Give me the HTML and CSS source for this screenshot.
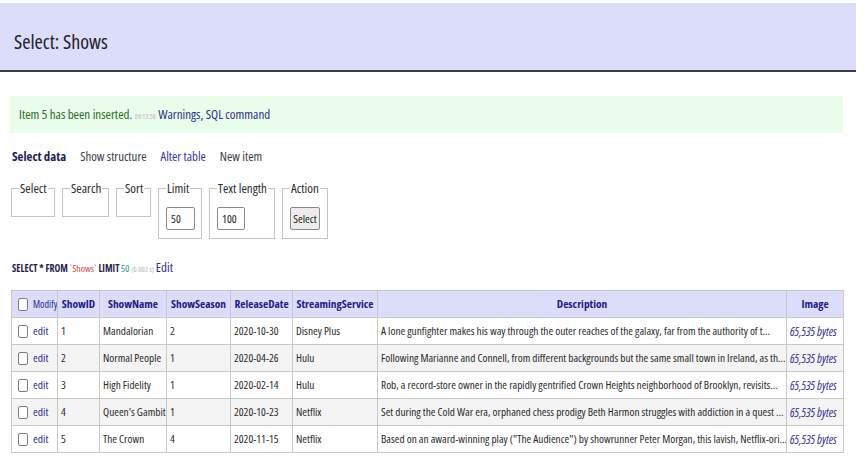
FILE: index.html
```html
<!DOCTYPE html>
<html>
<head>
<meta charset="utf-8">
<title>Select: Shows</title>
<link rel="stylesheet" href="styles.css">
</head>
<body>
<div class="page">
  <h2 class="title">Select: Shows</h2>
  <div class="content">
    <div class="message">Item 5 has been inserted. <span class="time">09:13:56</span> <a class="link" href="#">Warnings, SQL command</a></div>
    <p class="links">
      <a class="nav active" href="#">Select data</a>
      <a class="nav visited" href="#">Show structure</a>
      <a class="nav" href="#">Alter table</a>
      <a class="nav visited" href="#">New item</a>
    </p>
    <form class="filters">
      <fieldset class="fs fs-select"><legend>Select</legend><div class="fs-empty"></div></fieldset>
      <fieldset class="fs fs-search"><legend>Search</legend><div class="fs-empty"></div></fieldset>
      <fieldset class="fs fs-sort"><legend>Sort</legend><div class="fs-empty"></div></fieldset>
      <fieldset class="fs fs-limit"><legend>Limit</legend><span class="inp inp-limit">50</span></fieldset>
      <fieldset class="fs fs-text"><legend>Text length</legend><span class="inp inp-text">100</span></fieldset>
      <fieldset class="fs fs-action"><legend>Action</legend><span class="btn">Select</span></fieldset>
    </form>
    <p class="sql"><code class="query">SELECT * FROM <span class="ident">`Shows`</span> LIMIT <span class="num">50</span></code> <span class="timing">(0.002 s)</span> <a class="link edit-sql" href="#">Edit</a></p>
    <table class="grid">
      <thead>
        <tr>
          <th class="th-mod w-mod"><span class="cb"></span><span class="modify">Modify</span></th>
          <th class="w-id">ShowID</th><th class="w-name">ShowName</th><th class="w-season">ShowSeason</th><th class="w-date">ReleaseDate</th><th class="w-svc">StreamingService</th><th class="w-desc">Description</th><th class="w-img">Image</th>
        </tr>
      </thead>
      <tbody>
        <tr>
          <td class="td-mod"><span class="cb"></span><a class="link" href="#">edit</a></td>
          <td>1</td><td>Mandalorian</td><td>2</td><td>2020-10-30</td><td>Disney Plus</td>
          <td>A lone gunfighter makes his way through the outer reaches of the galaxy, far from the authority of t…</td>
          <td><a class="link bytes" href="#">65,535 bytes</a></td>
        </tr>
        <tr class="odd">
          <td class="td-mod"><span class="cb"></span><a class="link" href="#">edit</a></td>
          <td>2</td><td>Normal People</td><td>1</td><td>2020-04-26</td><td>Hulu</td>
          <td>Following Marianne and Connell, from different backgrounds but the same small town in Ireland, as th…</td>
          <td><a class="link bytes" href="#">65,535 bytes</a></td>
        </tr>
        <tr>
          <td class="td-mod"><span class="cb"></span><a class="link" href="#">edit</a></td>
          <td>3</td><td>High Fidelity</td><td>1</td><td>2020-02-14</td><td>Hulu</td>
          <td>Rob, a record-store owner in the rapidly gentrified Crown Heights neighborhood of Brooklyn, revisits…</td>
          <td><a class="link bytes" href="#">65,535 bytes</a></td>
        </tr>
        <tr class="odd">
          <td class="td-mod"><span class="cb"></span><a class="link" href="#">edit</a></td>
          <td>4</td><td>Queen's Gambit</td><td>1</td><td>2020-10-23</td><td>Netflix</td>
          <td>Set during the Cold War era, orphaned chess prodigy Beth Harmon struggles with addiction in a quest …</td>
          <td><a class="link bytes" href="#">65,535 bytes</a></td>
        </tr>
        <tr>
          <td class="td-mod"><span class="cb"></span><a class="link" href="#">edit</a></td>
          <td>5</td><td>The Crown</td><td>4</td><td>2020-11-15</td><td>Netflix</td>
          <td>Based on an award-winning play ("The Audience") by showrunner Peter Morgan, this lavish, Netflix-ori…</td>
          <td><a class="link bytes" href="#">65,535 bytes</a></td>
        </tr>
      </tbody>
    </table>
  </div>
</div>
</body>
</html>
```
FILE: styles.css
```css
html, body {
  margin: 0;
  padding: 0;
  background: #fff;
}
body {
  font-family: "Open Sans", "DejaVu Sans", sans-serif;
  font-stretch: 75%;
  color: #2a2a2a;
  font-size: 13px;
}
a { text-decoration: none; }
.page {
  padding-top: 3px;
  width: 856px;
}
.title {
  margin: 0;
  background: #dcdcfb;
  border-bottom: 2px solid #3d3d45;
  height: 69px;
  box-sizing: border-box;
  padding: 26px 0 0 14px;
  font-size: 20px;
  line-height: 26px;
  font-weight: normal;
  font-stretch: 80%;
  color: #222;
}
.content {
  padding-left: 11px;
}
.link { color: #2d2d8f; }
.message {
  margin: 24px 0 0 -1px;
  width: 833px;
  height: 37px;
  box-sizing: border-box;
  padding: 0 9px;
  line-height: 37px;
  background: #eafdea;
  color: #2e6a2e;
  font-size: 13px;
}
.time {
  font-size: 7px;
  color: #b5b5b5;
}
.links {
  margin: 15px 0 0 1px;
  line-height: 16px;
  font-size: 12.8px;
  display: flex;
  gap: 14px;
}
.nav { color: #3535a0; }
.nav.visited { color: #3a3a48; }
.nav.active { color: #1d1d55; font-weight: bold; }
.filters {
  display: flex;
  align-items: flex-start;
  gap: 7px;
  margin-top: 17px;
}
.fs {
  margin: 0;
  padding: 9px 6px 8px 7px;
  border: 1px solid #c4c4c4;
  box-sizing: border-box;
  min-width: 0;
}
.fs legend {
  padding: 0 1px;
  font-size: 13px;
  line-height: 14px;
  color: #2a2a2a;
  white-space: nowrap;
}
.fs-empty { height: 4px; }
.fs-select { width: 44px; }
.fs-search { width: 47px; }
.fs-sort { width: 35px; }
.fs-limit { width: 44px; }
.fs-text { width: 66px; }
.fs-action { width: 46px; }
.inp {
  display: block;
  margin-top: 3px;
  height: 23px;
  box-sizing: border-box;
  border: 1px solid #8a8a8a;
  border-radius: 2px;
  padding-left: 4px;
  font-size: 11.5px;
  line-height: 21px;
  background: #fff;
  color: #222;
}
.inp-limit { width: 29px; }
.inp-text { width: 28px; }
.btn {
  display: block;
  margin-top: 3px;
  width: 30px;
  height: 23px;
  box-sizing: border-box;
  border: 1px solid #8a8a8a;
  border-radius: 2px;
  background: #ececec;
  text-align: center;
  font-size: 11.5px;
  line-height: 21px;
  color: #222;
}
.sql {
  margin: 21px 0 0 1px;
  line-height: 14px;
  font-size: 10px;
  white-space: nowrap;
}
.query {
  font-family: "Open Sans", sans-serif;
  font-stretch: 75%;
  font-weight: bold;
  font-size: 9.8px;
  color: #1e1e50;
}
.ident { color: #d04848; font-weight: normal; }
.num { color: #2a9090; font-weight: normal; }
.timing { font-size: 7.5px; color: #b0b0b0; }
.edit-sql { font-size: 13px; }
.grid {
  margin-top: 14px;
  border-collapse: collapse;
  table-layout: fixed;
  width: 832px;
  border: 1px solid #b8b8b8;
  font-size: 11.3px;
}
.grid th, .grid td {
  box-sizing: border-box;
  height: 27px;
  padding: 0 3px;
  border: 1px solid #c8c8c8;
  white-space: nowrap;
  overflow: hidden;
  line-height: 16px;
}
.w-mod { width: 46px; }
.w-id { width: 42px; }
.w-name { width: 67px; }
.w-season { width: 64px; }
.w-date { width: 62px; }
.w-svc { width: 85px; }
.w-desc { width: 409px; }
.w-img { width: 57px; }
.grid tbody tr td { border-top-color: #a8a8a8; }
.grid th {
  background: #dcdcfb;
  color: #20208a;
  font-weight: bold;
  text-align: center;
  font-size: 11.4px;
}
.grid td { color: #2a2a2a; }
.grid tr.odd td { background: #f4f4f4; }
.grid .th-mod, .grid .td-mod {
  text-align: left;
  padding: 0 0 0 6px;
}
.th-mod .modify {
  font-weight: normal;
  color: #2d2d8f;
  font-size: 10px;
}
.cb {
  display: inline-block;
  width: 10px;
  height: 13px;
  margin-right: 5px;
  box-sizing: border-box;
  border: 1px solid #7d7d7d;
  border-radius: 2px;
  background: #fff;
  vertical-align: -3px;
}
.td-mod .link { font-size: 11.5px; }
.bytes { font-style: italic; font-size: 11.8px; }
```
